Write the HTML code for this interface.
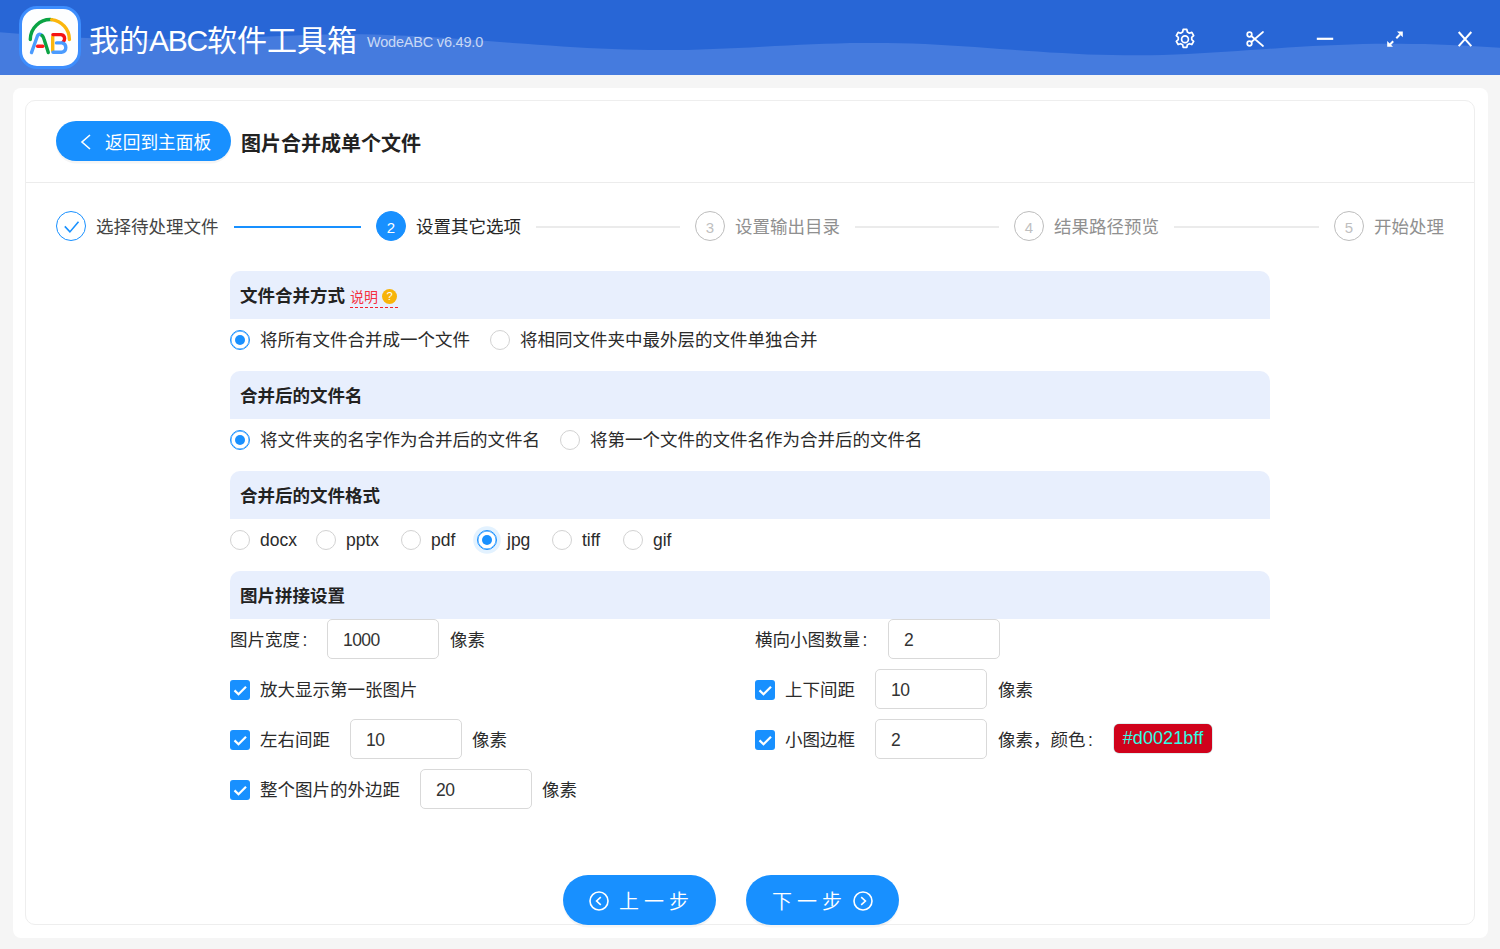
<!DOCTYPE html>
<html lang="zh-CN">
<head>
<meta charset="utf-8">
<title>我的ABC软件工具箱</title>
<style>
*{box-sizing:border-box;margin:0;padding:0}
html,body{width:1500px;height:949px;overflow:hidden}
body{position:relative;background:#f5f5f5;font-family:"Liberation Sans","Noto Sans CJK SC",sans-serif;font-size:17.5px;color:#262626;line-height:1}
.abs{position:absolute}
/* header */
#hdr{position:absolute;left:0;top:0;width:1500px;height:75px;background:#2866d6;overflow:hidden}
#hdr svg.wave{position:absolute;left:0;top:0}
#logo{position:absolute;left:19px;top:6px;width:62px;height:63px;border:3px solid #3d8dfd;border-radius:18px;background:#fdfeff}
#logo svg{position:absolute;left:-3px;top:-3px}
#ttl{position:absolute;left:89px;top:23px;height:36px;line-height:36px;font-size:30px;color:#fff;white-space:nowrap;font-weight:400}
#ver{position:absolute;left:367px;top:33px;height:18px;line-height:18px;font-size:14.5px;letter-spacing:-.2px;color:rgba(255,255,255,.72);white-space:nowrap}
.hi{position:absolute;top:27px;width:24px;height:24px}
/* panels */
#outer{position:absolute;left:13px;top:88px;width:1475px;height:850px;background:#fff;border-radius:8px}
#card{position:absolute;left:25px;top:100px;width:1450px;height:825px;background:#fff;border:1px solid #eeeeee;border-radius:10px}
#divider{position:absolute;left:26px;top:182px;width:1448px;height:1px;background:#ececec}
#back{position:absolute;left:56px;top:121px;width:175px;height:40px;border-radius:20px;background:#1890ff;color:#fff;box-shadow:0 2.5px 0 rgba(0,0,0,.04)}
#back span{position:absolute;left:49px;top:2px;line-height:40px;white-space:nowrap;font-size:17.7px}
#back svg{position:absolute;left:24px;top:13px}
#ptitle{position:absolute;left:241px;top:129px;line-height:30px;font-size:20px;font-weight:700;color:#222;white-space:nowrap}
/* steps */
.sc{position:absolute;overflow:visible;top:211px;width:30px;height:30px;border-radius:50%;border:1px solid #bdbdbd;color:#bfbfbf;text-align:center;line-height:31px;font-size:15px;background:#fff}
.sc.on{background:#1890ff;border-color:#1890ff;color:#fff}
.sc.done{border-color:#1890ff}
.st{position:absolute;top:212px;line-height:30px;white-space:nowrap;color:#909090}
.sl{position:absolute;top:226px;height:2px;background:#ebebeb}
/* sections */
.sh{position:absolute;left:230px;width:1040px;height:48px;background:#e8effd;border-radius:10px 10px 0 0}
.sh b{position:absolute;left:10px;top:0;line-height:50px;font-weight:700;color:#222;white-space:nowrap}
.row{position:absolute;left:230px;height:40px;white-space:nowrap}
.t{position:absolute;line-height:40px;white-space:nowrap;color:#2b2b2b}
.rd{position:absolute;width:20px;height:20px;border-radius:50%;border:1px solid #d2d2d2;background:#fff}
.rd.on{border-color:#1890ff;box-shadow:inset 0 0 0 .4px #1890ff}
.rd.on:after{content:"";position:absolute;left:4px;top:4px;width:10px;height:10px;border-radius:50%;background:#1890ff}
.rd.foc{box-shadow:0 0 0 3.8px rgba(24,144,255,.12),inset 0 0 0 .4px #1890ff}
.cb{position:absolute;width:20px;height:20px;border-radius:3px;background:#1890ff}
.cb svg{position:absolute;left:0;top:0}
.inp{position:absolute;width:112px;height:40px;border:1px solid #d9d9d9;border-radius:5px;background:#fff;line-height:41px;padding-left:15px;color:#333;letter-spacing:-.6px}
#sw{position:absolute;left:1114px;top:724px;width:98px;height:29px;border-radius:5px;background:#d0021b;box-shadow:0 0 0 .6px #c3e0e0;color:#2ffde4;text-align:center;line-height:29px;font-size:18px;letter-spacing:.1px;white-space:nowrap}
.btn{position:absolute;top:875px;width:153px;height:50px;border-radius:25px;background:#1890ff;color:#fff;box-shadow:0 2.5px 0 rgba(0,0,0,.04)}
.btn span{position:absolute;top:2px;line-height:50px;font-size:20px;letter-spacing:5px;font-weight:350;white-space:nowrap}
.btn svg{position:absolute;top:15.5px}
#exp{position:absolute;left:120px;top:16px;height:21px;line-height:20px;font-size:14px;color:#f5303e;border-bottom:1px dashed #f5222d;white-space:nowrap;padding-right:1px}
#exp i{display:inline-block;width:15px;height:15px;border-radius:50%;background:#f7b40a;color:#fff;font-style:normal;font-size:11px;line-height:15px;text-align:center;margin-left:4px;vertical-align:2px;font-weight:400}
</style>
</head>
<body>
<div id="hdr">
<svg class="wave" width="1500" height="75" viewBox="0 0 1500 75"><path d="M0,32.2 L12.5,33.3 L25,34.3 L37.5,35.2 L50,36.0 L62.5,36.7 L75,37.4 L87.5,37.9 L100,38.4 L112.5,38.7 L125,39.0 L137.5,39.2 L150,39.3 L162.5,39.3 L175,39.3 L187.5,39.1 L200,38.9 L212.5,38.6 L225,38.2 L237.5,37.8 L250,37.3 L262.5,36.8 L275,36.3 L287.5,35.8 L300,35.3 L312.5,34.9 L325,34.6 L337.5,34.4 L350,34.3 L362.5,34.3 L375,34.5 L387.5,34.9 L400,35.4 L412.5,36.0 L425,36.7 L437.5,37.4 L450,38.3 L462.5,39.2 L475,40.1 L487.5,41.0 L500,42.0 L512.5,42.9 L525,43.8 L537.5,44.7 L550,45.6 L562.5,46.4 L575,47.2 L587.5,47.9 L600,48.5 L612.5,49.0 L625,49.5 L637.5,49.8 L650,50.0 L662.5,50.1 L675,50.1 L687.5,49.9 L700,49.6 L712.5,49.1 L725,48.6 L737.5,48.0 L750,47.4 L762.5,46.7 L775,46.0 L787.5,45.4 L800,44.8 L812.5,44.2 L825,43.8 L837.5,43.4 L850,43.1 L862.5,43.0 L875,42.9 L887.5,43.0 L900,43.2 L912.5,43.6 L925,44.1 L937.5,44.7 L950,45.5 L962.5,46.3 L975,47.1 L987.5,48.0 L1000,48.9 L1012.5,49.8 L1025,50.7 L1037.5,51.6 L1050,52.4 L1062.5,53.1 L1075,53.8 L1087.5,54.4 L1100,54.8 L1112.5,55.1 L1125,55.3 L1137.5,55.3 L1150,55.2 L1162.5,54.9 L1175,54.5 L1187.5,53.9 L1200,53.3 L1212.5,52.6 L1225,51.8 L1237.5,51.0 L1250,50.1 L1262.5,49.3 L1275,48.4 L1287.5,47.6 L1300,46.8 L1312.5,46.1 L1325,45.4 L1337.5,44.9 L1350,44.4 L1362.5,44.1 L1375,43.8 L1387.5,43.7 L1400,43.8 L1412.5,43.9 L1425,44.1 L1437.5,44.5 L1450,44.9 L1462.5,45.5 L1475,46.2 L1487.5,46.9 L1500,47.8 L1500,75 L0,75 Z" fill="#457bde"/></svg>
<div id="logo"><svg width="62" height="63" viewBox="19 6 62 63" fill="none" stroke-width="3.4" stroke-linecap="round" stroke-linejoin="round">
<path d="M30.3,39.5 A20,20 0 0 1 51.6,19.6" stroke="#0aa344"/>
<path d="M51.6,19.6 A20,20 0 0 1 69.4,39.5" stroke="#fbb60d"/>
<path d="M31.5,52.6 L37.6,35.5 Q39.6,33 42,35.5" stroke="#4a9bff"/>
<path d="M42,35.5 Q43.2,36.2 44,39 L48.3,52.6" stroke="#0aa344"/>
<path d="M37.6,46.2 L42.8,46.2" stroke="#ff1a1a"/>
<path d="M52.7,36.5 L52.7,51" stroke="#fbb60d"/>
<path d="M52.9,34.6 L61,34.6 Q64.6,35 64.6,38.6 Q64.6,41 63,42.2" stroke="#f51313"/>
<path d="M56.5,42.9 L62,42.9 Q65.8,43.5 65.8,47.6 Q65.8,51.8 61.5,52.3 L53,52.3" stroke="#4a9bff"/>
</svg></div>
<div id="ttl">我的<span style="letter-spacing:-1.2px">ABC</span>软件工具箱</div>
<div id="ver">WodeABC v6.49.0</div>
<svg class="hi" style="left:1173px" viewBox="0 0 24 24" fill="none" stroke="#fff" stroke-width="1.6" stroke-linejoin="round"><g transform="translate(12 12.3) scale(1.07) translate(-12 -12)"><circle cx="12" cy="12" r="3.2"/><path d="M10.3,2.8h3.4l.5,2.4 1.9,1.1 2.3-.8 1.7,3-1.8,1.6v2.2l1.8,1.6-1.7,3-2.3-.8-1.9,1.1-.5,2.4h-3.4l-.5-2.4-1.9-1.1-2.3,.8-1.7-3 1.8-1.6v-2.2l-1.8-1.6 1.7-3 2.3,.8 1.9-1.1z"/></g></svg>
<svg class="hi" style="left:1243px" viewBox="0 0 24 24" fill="none" stroke="#fff" stroke-width="1.7" stroke-linecap="round"><circle cx="6.5" cy="7.5" r="2.3"/><circle cx="6.5" cy="16.5" r="2.3"/><path d="M8.3,9 L20,19 M8.3,15 L20,5"/></svg>
<svg class="hi" style="left:1313px" viewBox="0 0 24 24" fill="none" stroke="#fff" stroke-width="2.2"><path d="M3.8,11.8 H20.2"/></svg>
<svg class="hi" style="left:1383px" viewBox="0 0 24 24" fill="none" stroke="#fff" stroke-width="2"><path d="M7,17.5 L10.2,14.3 M13.3,11.2 L17,7.5"/><path d="M14,4.4 H19.8 V10.2 Z M4.2,14 V19.8 H10 Z" fill="#fff" stroke="none"/></svg>
<svg class="hi" style="left:1453px" viewBox="0 0 24 24" fill="none" stroke="#fff" stroke-width="2"><path d="M5.7,5 L18.3,19.2 M18.3,5 L5.7,19.2"/></svg>
</div>

<div id="outer"></div>
<div id="card"></div>
<div id="divider"></div>
<div id="back"><svg width="12" height="16" viewBox="0 0 12 16" fill="none" stroke="#fff" stroke-width="1.6"><path d="M10,1 L2,8 L10,15"/></svg><span>返回到主面板</span></div>
<div id="ptitle">图片合并成单个文件</div>

<!-- steps -->
<div class="sc done" style="left:56px"><svg width="28" height="28" viewBox="0 0 28 28" fill="none" stroke="#1890ff" stroke-width="1.6" style="position:absolute;left:0;top:0"><path d="M7.8,14.4 L12.9,19.9 L21.5,9.8"/></svg></div>
<div class="st" style="left:96px;color:#444">选择待处理文件</div>
<div class="sl" style="left:234px;width:127px;background:#1890ff"></div>
<div class="sc on" style="left:376px">2</div>
<div class="st" style="left:416px;color:#262626">设置其它选项</div>
<div class="sl" style="left:536px;width:144px"></div>
<div class="sc" style="left:695px">3</div>
<div class="st" style="left:735px">设置输出目录</div>
<div class="sl" style="left:855px;width:144px"></div>
<div class="sc" style="left:1014px">4</div>
<div class="st" style="left:1054px">结果路径预览</div>
<div class="sl" style="left:1174px;width:145px"></div>
<div class="sc" style="left:1334px">5</div>
<div class="st" style="left:1374px">开始处理</div>
<div class="sh" style="top:271px"><b>文件合并方式</b><span id="exp">说明<i>?</i></span></div>
<div class="rd on" style="left:230px;top:330px"></div><div class="t" style="left:260px;top:320px;">将所有文件合并成一个文件</div>
<div class="rd" style="left:490px;top:330px"></div><div class="t" style="left:520px;top:320px;">将相同文件夹中最外层的文件单独合并</div>
<div class="sh" style="top:371px"><b>合并后的文件名</b></div>
<div class="rd on" style="left:230px;top:430px"></div><div class="t" style="left:260px;top:420px;">将文件夹的名字作为合并后的文件名</div>
<div class="rd" style="left:560px;top:430px"></div><div class="t" style="left:590px;top:420px;">将第一个文件的文件名作为合并后的文件名</div>
<div class="sh" style="top:471px"><b>合并后的文件格式</b></div>
<div class="rd" style="left:230px;top:530px"></div><div class="t" style="left:260px;top:520px;">docx</div>
<div class="rd" style="left:316px;top:530px"></div><div class="t" style="left:346px;top:520px;">pptx</div>
<div class="rd" style="left:401px;top:530px"></div><div class="t" style="left:431px;top:520px;">pdf</div>
<div class="rd on foc" style="left:477px;top:530px"></div><div class="t" style="left:507px;top:520px;">jpg</div>
<div class="rd" style="left:552px;top:530px"></div><div class="t" style="left:582px;top:520px;">tiff</div>
<div class="rd" style="left:623px;top:530px"></div><div class="t" style="left:653px;top:520px;">gif</div>
<div class="sh" style="top:571px"><b>图片拼接设置</b></div>
<div class="t" style="left:230px;top:620px;">图片宽度<span style="margin-left:2.5px">:</span></div><div class="inp" style="left:327px;top:619px">1000</div><div class="t" style="left:450px;top:620px;">像素</div>
<div class="t" style="left:755px;top:620px;">横向小图数量<span style="margin-left:2.5px">:</span></div><div class="inp" style="left:888px;top:619px">2</div>
<div class="cb" style="left:230px;top:680px"><svg width="20" height="20" viewBox="0 0 20 20" fill="none" stroke="#fff" stroke-width="2.2"><path d="M4.5,10.4 L8.5,14.3 L16,6.7"/></svg></div><div class="t" style="left:260px;top:670px;">放大显示第一张图片</div>
<div class="cb" style="left:755px;top:680px"><svg width="20" height="20" viewBox="0 0 20 20" fill="none" stroke="#fff" stroke-width="2.2"><path d="M4.5,10.4 L8.5,14.3 L16,6.7"/></svg></div><div class="t" style="left:785px;top:670px;">上下间距</div><div class="inp" style="left:875px;top:669px">10</div><div class="t" style="left:998px;top:670px;">像素</div>
<div class="cb" style="left:230px;top:730px"><svg width="20" height="20" viewBox="0 0 20 20" fill="none" stroke="#fff" stroke-width="2.2"><path d="M4.5,10.4 L8.5,14.3 L16,6.7"/></svg></div><div class="t" style="left:260px;top:720px;">左右间距</div><div class="inp" style="left:350px;top:719px">10</div><div class="t" style="left:472px;top:720px;">像素</div>
<div class="cb" style="left:755px;top:730px"><svg width="20" height="20" viewBox="0 0 20 20" fill="none" stroke="#fff" stroke-width="2.2"><path d="M4.5,10.4 L8.5,14.3 L16,6.7"/></svg></div><div class="t" style="left:785px;top:720px;">小图边框</div><div class="inp" style="left:875px;top:719px">2</div><div class="t" style="left:998px;top:720px;">像素，颜色<span style="margin-left:2.5px">:</span></div><div id="sw">#d0021bff</div>
<div class="cb" style="left:230px;top:780px"><svg width="20" height="20" viewBox="0 0 20 20" fill="none" stroke="#fff" stroke-width="2.2"><path d="M4.5,10.4 L8.5,14.3 L16,6.7"/></svg></div><div class="t" style="left:260px;top:770px;">整个图片的外边距</div><div class="inp" style="left:420px;top:769px">20</div><div class="t" style="left:542px;top:770px;">像素</div>
<div class="btn" style="left:563px"><svg width="20" height="20" viewBox="0 0 20 20" fill="none" stroke="#fff" stroke-width="1.6" style="left:26px"><circle cx="10" cy="10" r="9"/><path d="M11.8,6.2 L7.6,10 L11.8,13.8"/></svg><span style="left:56px">上一步</span></div>
<div class="btn" style="left:746px"><span style="left:26px">下一步</span><svg width="20" height="20" viewBox="0 0 20 20" fill="none" stroke="#fff" stroke-width="1.6" style="left:107px"><circle cx="10" cy="10" r="9"/><path d="M8.2,6.2 L12.4,10 L8.2,13.8"/></svg></div>
</body>
</html>
